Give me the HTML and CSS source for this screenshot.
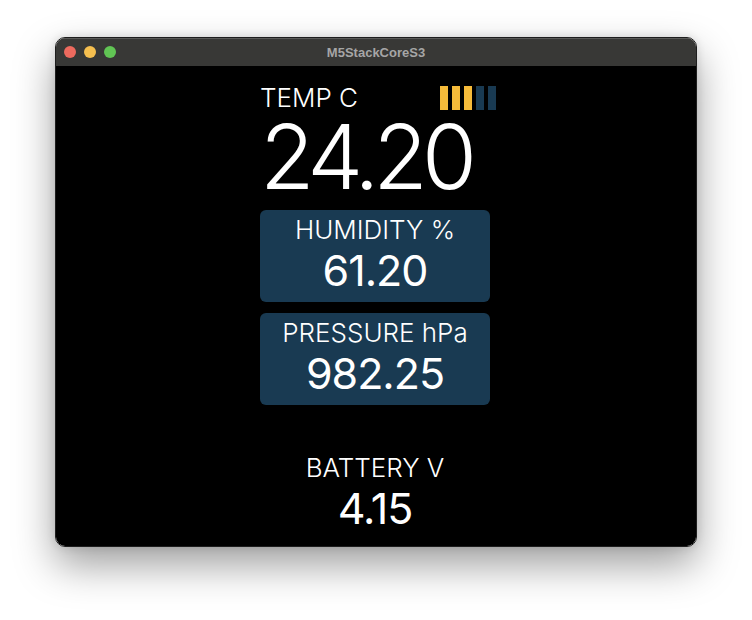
FILE: index.html
```html
<!DOCTYPE html>
<html>
<head>
<meta charset="utf-8">
<link rel="stylesheet" href="styles.css">
</head>
<body>
<div class="window">
  <div class="titlebar">
    <div class="lights">
      <span class="light red"></span>
      <span class="light yellow"></span>
      <span class="light green"></span>
    </div>
    <div class="title">M5StackCoreS3</div>
  </div>
  <div class="screen">
    <div class="col">
      <div class="toprow">
        <span class="label">TEMP C</span>
        <div class="bars">
          <span class="bar on"></span>
          <span class="bar on"></span>
          <span class="bar on"></span>
          <span class="bar off"></span>
          <span class="bar off"></span>
        </div>
      </div>
      <div class="big">24.20</div>
      <div class="card card-hum">
        <div class="label">HUMIDITY %</div>
        <div class="mid">61.20</div>
      </div>
      <div class="card card-pres">
        <div class="label">PRESSURE hPa</div>
        <div class="mid">982.25</div>
      </div>
      <div class="battery">
        <div class="label">BATTERY V</div>
        <div class="mid">4.15</div>
      </div>
    </div>
  </div>
</div>
</body>
</html>
```

FILE: styles.css
```css
html, body {
  margin: 0;
  padding: 0;
  background: #ffffff;
}
html {
  height: 100%;
}
body {
  min-height: 100%;
  box-sizing: border-box;
  padding: 37px 0 0 55px;
}
.window {
  width: 640px;
  border: 1px solid #1e1e1e;
  border-radius: 10px;
  overflow: hidden;
  box-shadow: 0 18px 40px rgba(0, 0, 0, 0.38), 0 0 10px rgba(0, 0, 0, 0.12);
}
.titlebar {
  height: 28px;
  background: #383836;
  box-shadow: inset 0 1px 0 #5a5a58;
  position: relative;
  display: flex;
  align-items: center;
  justify-content: center;
}
.lights {
  position: absolute;
  left: 8px;
  top: 8px;
  display: flex;
  gap: 8px;
}
.light {
  width: 12px;
  height: 12px;
  border-radius: 50%;
}
.red { background: #ed6a5e; }
.yellow { background: #f5bf4f; }
.green { background: #61c554; }
.title {
  font-family: "Liberation Sans", Arial, sans-serif;
  font-weight: bold;
  font-size: 13px;
  color: #a6a6a6;
}
.screen {
  height: 480px;
  background: #000;
  padding: 20px 0 0 204px;
  box-sizing: border-box;
}
.col {
  width: 236px;
  display: flex;
  flex-direction: column;
  color: #fff;
}
.label {
  font-family: "Inter", "DejaVu Sans", sans-serif;
  font-weight: 300;
  font-size: 26px;
  line-height: 24px;
}
.toprow {
  display: flex;
  justify-content: space-between;
  align-items: center;
  height: 24px;
}
.bars {
  display: flex;
  gap: 4px;
}
.bar {
  width: 8px;
  height: 24px;
}
.bar.on { background: #f6bb3a; }
.bar.off { background: #193a52; }
.big {
  font-family: "Inter", "DejaVu Sans", sans-serif;
  font-weight: 300;
  font-size: 89px;
  line-height: 70px;
  letter-spacing: -6px;
  margin: 12px 0 0 0;
  height: 70px;
}
.card {
  width: 230px;
  height: 92px;
  background: #193a52;
  border-radius: 6px;
  display: flex;
  flex-direction: column;
  align-items: center;
  box-sizing: border-box;
  padding-top: 8px;
}
.card-hum { margin-top: 18px; }
.card-pres { margin-top: 11px; }
.mid {
  font-family: "Inter", "DejaVu Sans", sans-serif;
  font-weight: 400;
  font-size: 43px;
  line-height: 36px;
  margin-top: 10px;
  letter-spacing: -1px;
}
.battery {
  width: 230px;
  display: flex;
  flex-direction: column;
  align-items: center;
  margin-top: 51px;
}
```
